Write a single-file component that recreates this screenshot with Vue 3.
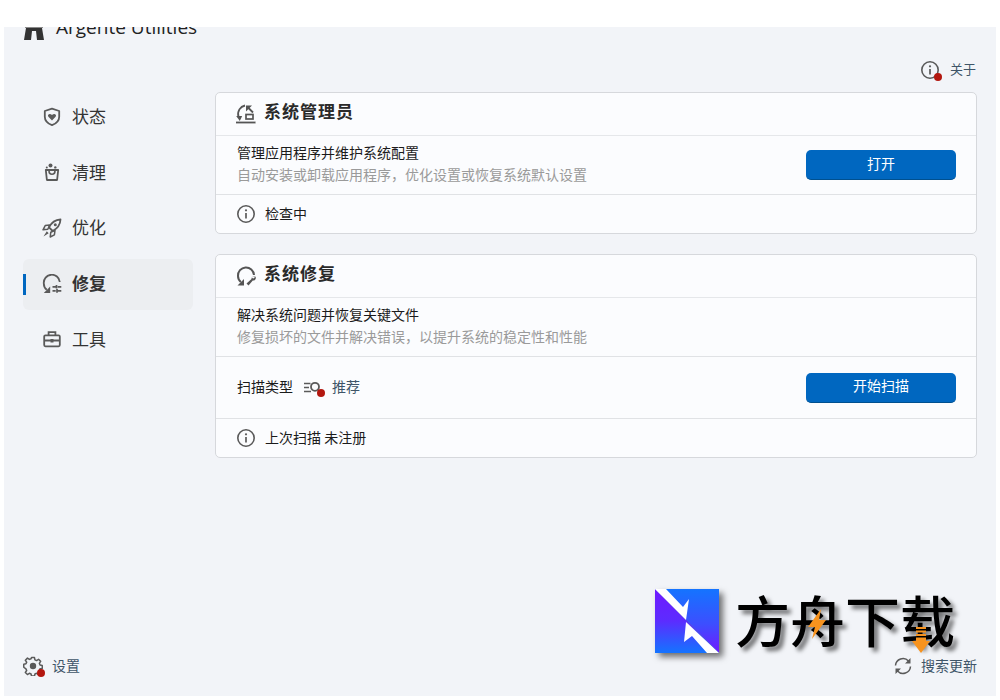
<script setup>
const navItems = [
  { id: 'status', label: '状态' },
  { id: 'clean', label: '清理' },
  { id: 'optimize', label: '优化' },
  { id: 'repair', label: '修复', active: true },
  { id: 'tools', label: '工具' }
]
</script>

<template>
  <div class="window">
    <aside class="sidebar">
      <div class="brand">
        <svg class="brand-icon" width="24" height="24" viewBox="0 0 24 24">
          <path d="M6 0h12l4 24h-7l-1-9h-4l-1 9H2z" fill="#333" />
          <rect x="3" y="7" width="18" height="5" fill="#8a8a8a" />
        </svg>
        <span class="brand-name">Argente Utilities</span>
      </div>
      <nav class="nav">
        <div v-for="item in navItems" :key="item.id" class="nav-item" :class="{ active: item.active }">
          <svg v-if="item.id === 'status'" class="nav-icon" viewBox="0 0 20 20">
            <path d="M10 1.700 2.800 4v5.800c0 4 3 6.800 7.200 8.400 4.200-1.600 7.200-4.400 7.200-8.400V4z" fill="none" stroke="#5a5a5a" stroke-width="1.800" stroke-linejoin="round" />
            <path d="M10 13.400 6.400 9.800C4.800 7.800 7.700 5.700 10 8c2.300-2.300 5.200-.2 3.600 1.800z" fill="#5a5a5a" />
          </svg>
          <svg v-else-if="item.id === 'clean'" class="nav-icon" viewBox="0 0 20 20">
            <path d="M3.800 8h12.400l-1.100 10H4.900z" fill="none" stroke="#5a5a5a" stroke-width="1.800" stroke-linejoin="round" />
            <path d="M7 8.500c0 5 6 5 6 0" fill="none" stroke="#5a5a5a" stroke-width="1.700" />
            <circle cx="8.500" cy="3.600" r="2" fill="#5a5a5a" /><circle cx="4.800" cy="5.400" r="1" fill="#5a5a5a" /><circle cx="13.300" cy="5.400" r="1.200" fill="#5a5a5a" />
          </svg>
          <svg v-else-if="item.id === 'optimize'" class="nav-icon" viewBox="0 0 20 20">
            <path d="M18.500 1.500c-5.500.3-9 3-11.500 7.800l3.700 3.700c4.800-2.500 7.500-6 7.800-11.500z" fill="none" stroke="#5a5a5a" stroke-width="1.800" stroke-linejoin="round" />
            <path d="M7.700 7 3.200 7.600 1 11.800l4.800-.6zM13 12.300l-.6 4.500-4.200 2.200.6-4.800z" fill="none" stroke="#5a5a5a" stroke-width="1.500" stroke-linejoin="round" />
            <circle cx="13.300" cy="6.700" r="1.500" fill="#5a5a5a" />
            <path d="M4.800 13.300 1.500 18.500l5.200-3.300z" fill="#5a5a5a" />
          </svg>
          <svg v-else-if="item.id === 'repair'" class="nav-icon" viewBox="0 0 20 20">
            <path d="M17.800 8A7.900 7.900 0 0 0 1.800 9.500c0 2.700 1 4.800 3 6.300" fill="none" stroke="#5a5a5a" stroke-width="1.800" />
            <path d="M1.800 19h6.400v-6.400z" fill="#5a5a5a" />
            <path d="M10.500 12.800h3.200M15.700 12.800h3.600M10.500 16.800h3.200M15.700 16.800h3.600M14.500 11v3.500M15 15v3.800" stroke="#5a5a5a" stroke-width="1.700" fill="none" />
          </svg>
          <svg v-else class="nav-icon" viewBox="0 0 20 20">
            <rect x="2.200" y="6.300" width="15.600" height="11" rx="1.200" fill="none" stroke="#5a5a5a" stroke-width="1.800" />
            <path d="M6.600 6.300V3.200h6.800v3.100" fill="none" stroke="#5a5a5a" stroke-width="1.800" />
            <path d="M2.200 11.500h15.600" stroke="#5a5a5a" stroke-width="2" />
            <rect x="8.500" y="10" width="3" height="3.500" fill="#5a5a5a" />
          </svg>
          <span class="nav-label">{{ item.label }}</span>
        </div>
      </nav>
      <div class="side-foot">
        <span class="icon-wrap">
          <svg width="20" height="20" viewBox="0 0 20 20">
            <path d="M8.300 1h3.400l.5 2.600 1.900.8 2.200-1.500 2.400 2.400-1.500 2.200.8 1.900 2.500.5v3.400l-2.500.5-.8 1.900 1.500 2.200-2.400 2.400-2.200-1.500-1.900.8-.5 2.400H8.300l-.5-2.400-1.900-.8-2.200 1.500-2.400-2.400 1.500-2.200-.8-1.900L-.5 12V8.600L2 8.100l.8-1.900-1.500-2.200 2.400-2.400 2.200 1.500 1.900-.8z" fill="none" stroke="#5a5a5a" stroke-width="1.700" stroke-linejoin="round" transform="translate(1.200 .7) scale(.88)" />
            <circle cx="10" cy="10" r="3.200" fill="#5a5a5a" />
          </svg>
          <i class="dot"></i>
        </span>
        <span class="link-text">设置</span>
      </div>
    </aside>

    <main class="main">
      <div class="topbar">
        <span class="icon-wrap">
          <svg width="20" height="20" viewBox="0 0 20 20">
            <circle cx="10" cy="10" r="8.200" fill="none" stroke="#5a5a5a" stroke-width="1.600" />
            <path d="M10 9v5.500" stroke="#5a5a5a" stroke-width="1.700" /><circle cx="10" cy="6.300" r="1.100" fill="#5a5a5a" />
          </svg>
          <i class="dot"></i>
        </span>
        <span class="link-text small">关于</span>
      </div>

      <section class="card">
        <header class="card-head">
          <svg width="20" height="20" viewBox="0 0 20 20">
            <path d="M9 1.500C4.500 2.500 .8 7 2.500 13" fill="none" stroke="#555" stroke-width="1.800" />
            <path d="M.2 12h6L3.800 17z" fill="#555" />
            <path d="M10 7.500V1.500h6z" fill="#555" />
            <path d="M12 3.500l5 5" stroke="#555" stroke-width="1.800" />
            <rect x="10" y="10.500" width="7" height="4.500" fill="none" stroke="#555" stroke-width="1.700" />
            <path d="M0 18.500h19.500" stroke="#555" stroke-width="1.800" />
          </svg>
          <h2>系统管理员</h2>
        </header>
        <div class="row action-row">
          <div class="text-block">
            <div class="line">管理应用程序并维护系统配置</div>
            <div class="line muted">自动安装或卸载应用程序，优化设置或恢复系统默认设置</div>
          </div>
          <button class="btn">打开</button>
        </div>
        <div class="row info-row">
          <svg class="info" width="20" height="20" viewBox="0 0 20 20">
            <circle cx="10" cy="10" r="8.200" fill="none" stroke="#5a5a5a" stroke-width="1.600" />
            <path d="M10 9v5.500" stroke="#5a5a5a" stroke-width="1.700" /><circle cx="10" cy="6.300" r="1.100" fill="#5a5a5a" />
          </svg>
          <span class="line">检查中</span>
        </div>
      </section>

      <section class="card">
        <header class="card-head">
          <svg width="20" height="20" viewBox="0 0 20 20">
            <path d="M18 9A8 8 0 0 0 2 10c0 2.400 1 4.400 2.800 5.900" fill="none" stroke="#555" stroke-width="2" />
            <path d="M1.500 19.500h6.500V13z" fill="#555" />
            <path d="M19.500 10.500c-1.800-1-4.200.2-4 2.600l-5 4.300 2 2 4.300-4.800c2.400.2 3.700-2 2.700-4l-2 1.800-1.300-.4-.3-1.200z" fill="#555" />
          </svg>
          <h2>系统修复</h2>
        </header>
        <div class="row action-row">
          <div class="text-block">
            <div class="line">解决系统问题并恢复关键文件</div>
            <div class="line muted">修复损坏的文件并解决错误，以提升系统的稳定性和性能</div>
          </div>
        </div>
        <div class="row scan-row">
          <span class="line">扫描类型</span>
          <span class="icon-wrap scan-icon">
            <svg width="20" height="20" viewBox="0 0 20 20">
              <path d="M1 5.500h6.500M1 9.500h5M1 13.500h7" stroke="#5a5a5a" stroke-width="1.600" />
              <circle cx="12" cy="8.800" r="4" fill="none" stroke="#5a5a5a" stroke-width="1.800" />
            </svg>
            <i class="dot scan-dot"></i>
          </span>
          <span class="link-text">推荐</span>
          <button class="btn scan-btn">开始扫描</button>
        </div>
        <div class="row info-row">
          <svg class="info" width="20" height="20" viewBox="0 0 20 20">
            <circle cx="10" cy="10" r="8.200" fill="none" stroke="#5a5a5a" stroke-width="1.600" />
            <path d="M10 9v5.500" stroke="#5a5a5a" stroke-width="1.700" /><circle cx="10" cy="6.300" r="1.100" fill="#5a5a5a" />
          </svg>
          <span class="line">上次扫描 未注册</span>
        </div>
      </section>

      <div class="main-foot">
        <svg width="18" height="18" viewBox="0 0 18 18">
          <path d="M1.500 8.500a7.500 7.500 0 0 1 13-4.500l1 1.200M16.500 9.500a7.500 7.500 0 0 1-13 4.500l-1-1.200" fill="none" stroke="#5a5a5a" stroke-width="1.500" />
          <path d="M16.500 1v5.500H11zM1.500 17v-5.500H7z" fill="#5a5a5a" />
        </svg>
        <span class="link-text">搜索更新</span>
      </div>
    </main>

    <div class="watermark">
      <svg class="wm-logo" width="64" height="64" viewBox="0 0 64 64">
        <defs>
          <linearGradient id="wm-right" x1="0" y1="0" x2="0" y2="1">
            <stop offset="0" stop-color="#1474ff" /><stop offset=".55" stop-color="#3d4eff" /><stop offset="1" stop-color="#7119ff" />
          </linearGradient>
          <linearGradient id="wm-left" x1="0" y1="0" x2="0" y2="1">
            <stop offset="0" stop-color="#7119ff" /><stop offset=".5" stop-color="#5c2cff" /><stop offset="1" stop-color="#1474ff" />
          </linearGradient>
        </defs>
        <polygon points="0,0 64,0 64,64" fill="url(#wm-right)" />
        <polygon points="0,0 0,64 64,64" fill="url(#wm-left)" />
        <polygon points="0,0 11,0 28,18 34,10 31,31" fill="#fff" />
        <polygon points="31,33 64,64 52,64 37,47 29,53" fill="#fff" />
      </svg>
      <div class="wm-text">方舟下载</div>
      <svg class="wm-bolt" width="18" height="30" viewBox="0 0 18 30">
        <path d="M13 0 0 18h7L4 30l14-19h-7z" fill="#f7931e" />
      </svg>
      <svg class="wm-arrow" width="18" height="26" viewBox="0 0 18 26">
        <path d="M4 0h10v2H4zM4 3.500h10v2H4zM4 7h10v2H4zM4 10.500h10V14h4L9 26 0 14h4z" fill="#f7931e" />
      </svg>
    </div>
  </div>
</template>

<style scoped>
.window {
  position: relative;
  display: flex;
  height: 669px;
  margin: 27px 4px 0;
  overflow: hidden;
  background: #f2f4f8;
  color: #1b1b1b;
  font-family: "Noto Sans CJK SC", "Noto Sans", sans-serif;
}
.sidebar {
  display: flex;
  flex-direction: column;
  flex: 0 0 211px;
  min-width: 0;
  padding: 0 22px 19px 19px;
  box-sizing: border-box;
}
.brand {
  display: flex;
  align-items: center;
  gap: 10px;
  height: 30px;
  margin: -15px 0 0 -1px;
}
.brand-icon { flex: none; margin-top: 2px; }
.brand-name {
  font-family: "Open Sans", sans-serif;
  font-size: 19px;
  color: #222;
  white-space: nowrap;
}
.nav {
  display: flex;
  flex-direction: column;
  gap: 4.700px;
  margin-top: 50px;
}
.nav-item {
  position: relative;
  display: flex;
  align-items: center;
  gap: 10px;
  height: 51px;
  padding-left: 19px;
  border-radius: 6px;
}
.nav-item.active { background: #eceef1; font-weight: 700; }
.nav-item.active::before {
  content: "";
  position: absolute;
  left: 0;
  top: 15px;
  width: 3px;
  height: 21px;
  background: #0067c0;
}
.nav-icon { flex: none; width: 20px; height: 20px; margin-bottom: 2px; }
.nav-label { font-size: 17px; color: #333; line-height: 1; margin-bottom: 4px; }
.side-foot {
  display: flex;
  align-items: center;
  gap: 9px;
  margin-top: auto;
}
.icon-wrap { position: relative; display: inline-flex; flex: none; }
.dot {
  position: absolute;
  right: -2px;
  bottom: -1px;
  width: 8px;
  height: 8px;
  border-radius: 50%;
  background: #b3170f;
}
.link-text { font-size: 14px; color: #3f5568; line-height: 20px; margin-bottom: 2px; }
.link-text.small { font-size: 13px; margin-right: 1px; }
.main {
  display: flex;
  flex-direction: column;
  flex: 1;
  min-width: 0;
  padding: 0 19px 19px 0;
}
.topbar {
  display: flex;
  align-items: center;
  justify-content: flex-end;
  gap: 10px;
  height: 20px;
  margin: 33px 0 12px;
}
.card {
  background: #fbfcfe;
  border: 1px solid #d6d8dc;
  border-radius: 5px;
  margin-bottom: 20px;
}
.card-head {
  display: flex;
  align-items: center;
  gap: 8px;
  height: 42px;
  padding-left: 20px;
  border-bottom: 1px solid #e5e7ea;
}
h2 {
  margin: 0 0 7px;
  font-size: 17px;
  letter-spacing: 1px;
  font-weight: 700;
  color: #2a2a2a;
}
.row {
  display: flex;
  align-items: center;
  padding: 0 20px 0 21px;
  border-bottom: 1px solid #e0e2e5;
}
.row:last-child { border-bottom: 0; }
.action-row { height: 58px; justify-content: space-between; }
.info-row { height: 38px; gap: 9px; }
.info-row .info { margin-left: -1px; }
.info-row .line { margin-bottom: 3px; }
.scan-row { height: 61px; }
.scan-row .line, .scan-row .link-text { margin-bottom: 4px; }
.text-block { margin-bottom: 4px; }
.line { font-size: 14px; line-height: 22px; color: #1b1b1b; }
.line.muted { color: #9a9a9a; }
.btn {
  flex: none;
  width: 150px;
  height: 30px;
  border: 0;
  border-bottom: 1px solid #00508f;
  border-radius: 5px;
  background: #0067c0;
  color: #fff;
  font: inherit;
  font-size: 14px;
  padding: 0 0 4px;
}
.scan-icon { margin: 0 9px 0 10px; }
.scan-dot { right: -2px; bottom: 1px; }
.scan-btn { margin-left: auto; }
.main-foot {
  display: flex;
  align-items: center;
  justify-content: flex-end;
  gap: 9px;
  margin-top: auto;
}
.watermark {
  position: absolute;
  left: 651px;
  top: 562px;
  width: 320px;
  height: 64px;
}
.wm-logo {
  position: absolute;
  left: 0;
  top: 0;
  filter: drop-shadow(4px 4px 3px rgba(0, 0, 0, .55));
}
.wm-text {
  position: absolute;
  left: 80px;
  top: -3px;
  font-size: 55px;
  font-weight: 500;
  line-height: 64px;
  color: #000;
  white-space: nowrap;
  text-shadow: 4px 4px 4px rgba(0, 0, 0, .55);
}
.wm-bolt { position: absolute; left: 153px; top: 20px; }
.wm-arrow { position: absolute; left: 257px; top: 38px; }
</style>
